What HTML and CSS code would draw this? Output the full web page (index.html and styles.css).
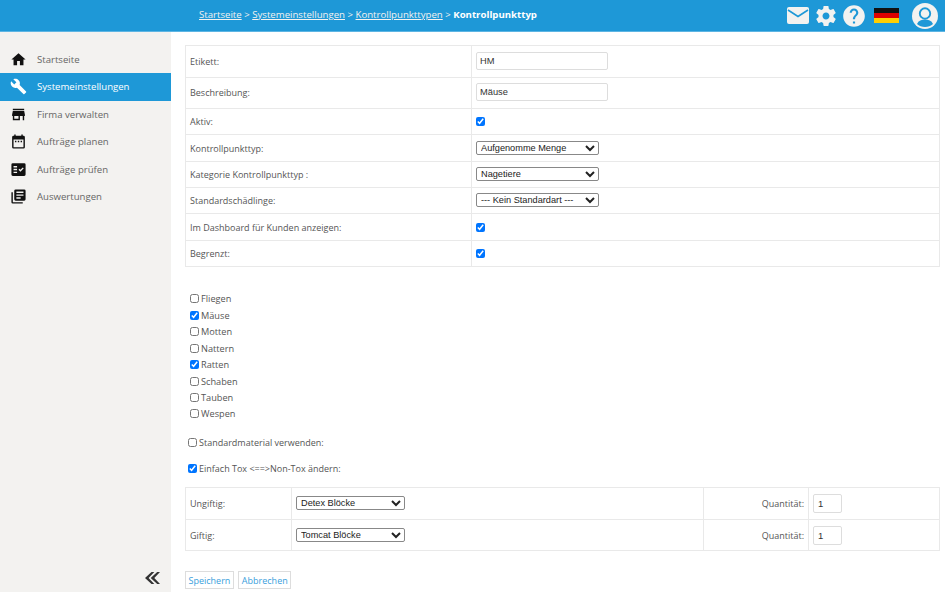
FILE: index.html
```html
<!DOCTYPE html>
<html lang="de">
<head>
<meta charset="utf-8">
<title>Kontrollpunkttyp</title>
<link rel="stylesheet" href="styles.css">
</head>
<body>
<header class="topbar">
  <nav class="crumbs"><a href="#">Startseite</a> &gt; <a href="#">Systemeinstellungen</a> &gt; <a href="#">Kontrollpunkttypen</a> &gt; <b>Kontrollpunkttyp</b></nav>
  <div class="top-icons">
    <svg class="i-mail" viewBox="0 0 22 17"><rect width="22" height="17" rx="2" fill="#f3f2f0"/><path d="M1 3l10 6.5L21 3" fill="none" stroke="#1e98d7" stroke-width="1.6"/></svg>
    <svg class="i-gear" viewBox="0 0 24 24"><path fill="#f3f2f0" d="M19.43 12.98c.04-.32.07-.64.07-.98s-.03-.66-.07-.98l2.11-1.65c.19-.15.24-.42.12-.64l-2-3.46c-.12-.22-.39-.3-.61-.22l-2.49 1c-.52-.4-1.08-.73-1.69-.98l-.38-2.65C14.46 2.18 14.25 2 14 2h-4c-.25 0-.46.18-.49.42l-.38 2.65c-.61.25-1.17.59-1.69.98l-2.49-1c-.23-.09-.49 0-.61.22l-2 3.46c-.13.22-.07.49.12.64l2.11 1.65c-.04.32-.07.65-.07.98s.03.66.07.98l-2.11 1.65c-.19.15-.24.42-.12.64l2 3.46c.12.22.39.3.61.22l2.49-1c.52.4 1.08.73 1.69.98l.38 2.65c.03.24.24.42.49.42h4c.25 0 .46-.18.49-.42l.38-2.65c.61-.25 1.17-.59 1.69-.98l2.49 1c.23.09.49 0 .61-.22l2-3.46c.12-.22.07-.49-.12-.64l-2.11-1.65zM12 15.5c-1.93 0-3.5-1.57-3.5-3.5s1.57-3.5 3.5-3.5 3.5 1.57 3.5 3.5-1.57 3.5-3.5 3.5z"/></svg>
    <svg class="i-help" viewBox="0 0 24 24"><path fill="#f3f2f0" d="M12 2C6.48 2 2 6.48 2 12s4.48 10 10 10 10-4.48 10-10S17.52 2 12 2zm1 17h-2v-2h2v2zm2.07-7.75l-.9.92C13.45 12.9 13 13.5 13 15h-2v-.5c0-1.1.45-2.1 1.17-2.83l1.24-1.26c.37-.36.59-.86.59-1.41 0-1.1-.9-2-2-2s-2 .9-2 2H8c0-2.21 1.79-4 4-4s4 1.79 4 4c0 .88-.36 1.68-.93 2.25z"/></svg>
    <svg class="i-flag" viewBox="0 0 25 15"><rect width="25" height="5" fill="#111"/><rect y="5" width="25" height="5" fill="#dd0000"/><rect y="10" width="25" height="5" fill="#ffce00"/></svg>
    <svg class="i-user" viewBox="0 0 26 26"><circle cx="13" cy="13" r="13" fill="#f3f2f0"/><circle cx="13" cy="10.5" r="5.2" fill="none" stroke="#1e98d7" stroke-width="1.9"/><path d="M5 21c1.5-3.2 4.5-4.4 8-4.4s6.500 1.200 8 4.400c-2 2-5 3-8 3s-6-1-8-3z" fill="#1e98d7"/></svg>
  </div>
</header>
<div class="shell">
  <aside class="sidebar">
    <ul class="menu">
      <li class="menu-item"><svg viewBox="0 0 24 24"><path d="M10 20v-6h4v6h5v-8h3L12 3 2 12h3v8z"/></svg>Startseite</li>
      <li class="menu-item active"><svg viewBox="0 0 24 24"><path d="M22.700 19l-9.100-9.100c.9-2.300.4-5-1.500-6.900-2-2-5-2.400-7.400-1.300L9 6 6 9 1.600 4.700C.4 7.100.9 10.100 2.900 12.100c1.900 1.900 4.600 2.400 6.900 1.500l9.100 9.100c.4.400 1 .4 1.400 0l2.300-2.300c.5-.4.5-1.100.1-1.400z"/></svg>Systemeinstellungen</li>
      <li class="menu-item"><svg viewBox="0 0 24 24"><path d="M4 4h16v2H4zM20 7H4l-1 5v2h1v6h10v-6h4v6h2v-6h1v-2l-1-5zm-8 11H6v-4h6v4z"/></svg>Firma verwalten</li>
      <li class="menu-item"><svg viewBox="0 0 24 24"><path d="M19 4h-1V2h-2v2H8V2H6v2H5a2 2 0 0 0-2 2v14a2 2 0 0 0 2 2h14a2 2 0 0 0 2-2V6a2 2 0 0 0-2-2zm0 16H5V9h14v11zM7 11h2v2H7zm4 0h2v2h-2zm4 0h2v2h-2z"/></svg>Aufträge planen</li>
      <li class="menu-item"><svg viewBox="0 0 24 24"><path fill-rule="evenodd" d="M20 3H4a2 2 0 0 0-2 2v14a2 2 0 0 0 2 2h16a2 2 0 0 0 2-2V5a2 2 0 0 0-2-2zM10 17H5v-2h5v2zm0-4H5v-2h5v2zm0-4H5V7h5v2zm4.800 6L12 12.200l1.400-1.400 1.400 1.400 3.200-3.200 1.400 1.400-4.600 4.600z"/></svg>Aufträge prüfen</li>
      <li class="menu-item"><svg viewBox="0 0 24 24"><path fill-rule="evenodd" d="M4 6H2v14a2 2 0 0 0 2 2h14v-2H4V6zm16-4H8a2 2 0 0 0-2 2v12a2 2 0 0 0 2 2h12a2 2 0 0 0 2-2V4a2 2 0 0 0-2-2zm-1 9H9V9h10v2zm-4 4H9v-2h6v2zm4-8H9V5h10v2z"/></svg>Auswertungen</li>
    </ul>
    <svg class="collapse" viewBox="0 0 15 12"><path d="M6.500 0L0 6l6.500 6h2.800L3.600 6l5.700-6zM12.200 0L5.700 6l6.500 6H15L9.300 6 15 0z"/></svg>
  </aside>
  <main class="content">
    <table class="form-table">
      <colgroup><col class="col-label"><col></colgroup>
      <tr class="row-tall"><td>Etikett:</td><td><input class="text-input" type="text" value="HM"></td></tr>
      <tr class="row-tall"><td>Beschreibung:</td><td><input class="text-input" type="text" value="Mäuse"></td></tr>
      <tr><td>Aktiv:</td><td><input class="check" type="checkbox" checked></td></tr>
      <tr><td>Kontrollpunkttyp:</td><td><select class="pick"><option>Aufgenomme Menge</option></select></td></tr>
      <tr><td>Kategorie Kontrollpunkttyp :</td><td><select class="pick"><option>Nagetiere</option></select></td></tr>
      <tr><td>Standardschädlinge:</td><td><select class="pick"><option>--- Kein Standardart ---</option></select></td></tr>
      <tr><td>Im Dashboard für Kunden anzeigen:</td><td><input class="check" type="checkbox" checked></td></tr>
      <tr><td>Begrenzt:</td><td><input class="check" type="checkbox" checked></td></tr>
    </table>
    <div class="pests">
      <label class="pest"><input class="check" type="checkbox">Fliegen</label>
      <label class="pest"><input class="check" type="checkbox" checked>Mäuse</label>
      <label class="pest"><input class="check" type="checkbox">Motten</label>
      <label class="pest"><input class="check" type="checkbox">Nattern</label>
      <label class="pest"><input class="check" type="checkbox" checked>Ratten</label>
      <label class="pest"><input class="check" type="checkbox">Schaben</label>
      <label class="pest"><input class="check" type="checkbox">Tauben</label>
      <label class="pest"><input class="check" type="checkbox">Wespen</label>
    </div>
    <label class="option first"><input class="check" type="checkbox">Standardmaterial verwenden:</label>
    <label class="option"><input class="check" type="checkbox" checked>Einfach Tox &lt;==&gt;Non-Tox ändern:</label>
    <table class="form-table material">
      <colgroup><col class="m1"><col><col class="m3"><col class="m4"></colgroup>
      <tr><td>Ungiftig:</td><td><select class="pick narrow"><option>Detex Blöcke</option></select></td><td class="right">Quantität:</td><td><input class="qty" type="text" value="1"></td></tr>
      <tr><td>Giftig:</td><td><select class="pick narrow"><option>Tomcat Blöcke</option></select></td><td class="right">Quantität:</td><td><input class="qty" type="text" value="1"></td></tr>
    </table>
    <div class="actions"><button class="btn">Speichern</button><button class="btn">Abbrechen</button></div>
  </main>
</div>
</body>
</html>
```
FILE: styles.css
```css
* { box-sizing: border-box; }
html, body { margin: 0; height: 100%; overflow: hidden; }
body { font-family: "Open Sans", sans-serif; font-size: 9px; color: #555; background: #fff; display: flex; flex-direction: column; }

.topbar { height: 32px; flex: none; background: #1e98d7; border-bottom: 1px solid #5db5e3; display: flex; align-items: center; padding-left: 199px; color: #f3f2f0; }
.crumbs { flex: 1; font-size: 9.65px; margin-top: -2px; }
.crumbs a { color: #f3f2f0; }
.crumbs b { color: #fff; font-weight: 700; }
.top-icons { display: flex; align-items: center; padding-right: 7px; }
.i-mail { width: 22px; height: 17px; margin-right: 5px; }
.i-gear { width: 24px; height: 24px; margin-right: 3px; }
.i-help { width: 26px; height: 26px; margin-right: 7px; }
.i-flag { width: 25px; height: 15px; margin-right: 13px; }
.i-user { width: 26px; height: 26px; }

.shell { flex: 1; display: flex; min-height: 0; }
.sidebar { width: 171px; flex: none; background: #f3f2f0; padding-top: 13.8px; position: relative; }
.menu { list-style: none; margin: 0; padding: 0; }
.menu-item { height: 27.4px; display: flex; align-items: center; padding-left: 10px; font-size: 9.6px; color: #666; }
.menu-item svg { width: 17px; height: 17px; margin-right: 10px; fill: #111; flex: none; }
.menu-item.active { background: #1e98d7; color: #fff; }
.menu-item.active svg { fill: #fff; }
.collapse { position: absolute; left: 145px; bottom: 8px; width: 15px; height: 12px; fill: #333; }

.content { flex: 1; padding: 13px 5px 0 14px; min-width: 0; }
.form-table { width: 100%; border-collapse: collapse; table-layout: fixed; border: 1px solid #e6e6e6; }
.form-table td { border: 1px solid #e9e9e9; padding: 0 4px; height: 26.3px; }
.form-table .row-tall td { height: 31.6px; }
.col-label { width: 286px; }
.text-input { width: 132px; height: 18px; border: 1px solid #ddd; border-radius: 2px; padding: 0 4px 0 3px; font: 9.3px "Liberation Sans", sans-serif; color: #333; display: block; margin-top: -1px; }
.check { width: 9px; height: 9px; margin: 0; display: block; flex: none; accent-color: #0075ff; }
.pick { width: 123px; height: 14px; font: 9.2px "Liberation Sans", sans-serif; color: #222; background: #fff; border: 1px solid #888; border-radius: 2px; padding: 0; display: block; margin-top: -1px; }
.narrow { width: 109px; }

.pests { margin: 23.7px 0 0 5px; font-size: 9.2px; }
.pest { height: 16.45px; display: flex; align-items: center; gap: 2px; }
.option { display: flex; align-items: center; gap: 2px; margin-left: 3px; height: 16px; margin-top: 10px; }
.option.first { margin-top: 12px; }

.material { margin-top: 11.3px; }
.material td { height: 31.5px; }
.m1 { width: 106px; }
.m3 { width: 105px; }
.m4 { width: 131px; }
.right { text-align: right; }
.qty { width: 29px; height: 19px; border: 1px solid #ddd; border-radius: 2px; padding: 0 4px; font: 9.5px "Liberation Sans", sans-serif; color: #333; display: block; }

.actions { display: flex; gap: 4.5px; margin-top: 20px; }
.btn { height: 18px; padding: 0 2.5px; background: #fff; border: 1px solid #ddd; font: 9px "Open Sans", sans-serif; color: #3aa0dc; }
```
